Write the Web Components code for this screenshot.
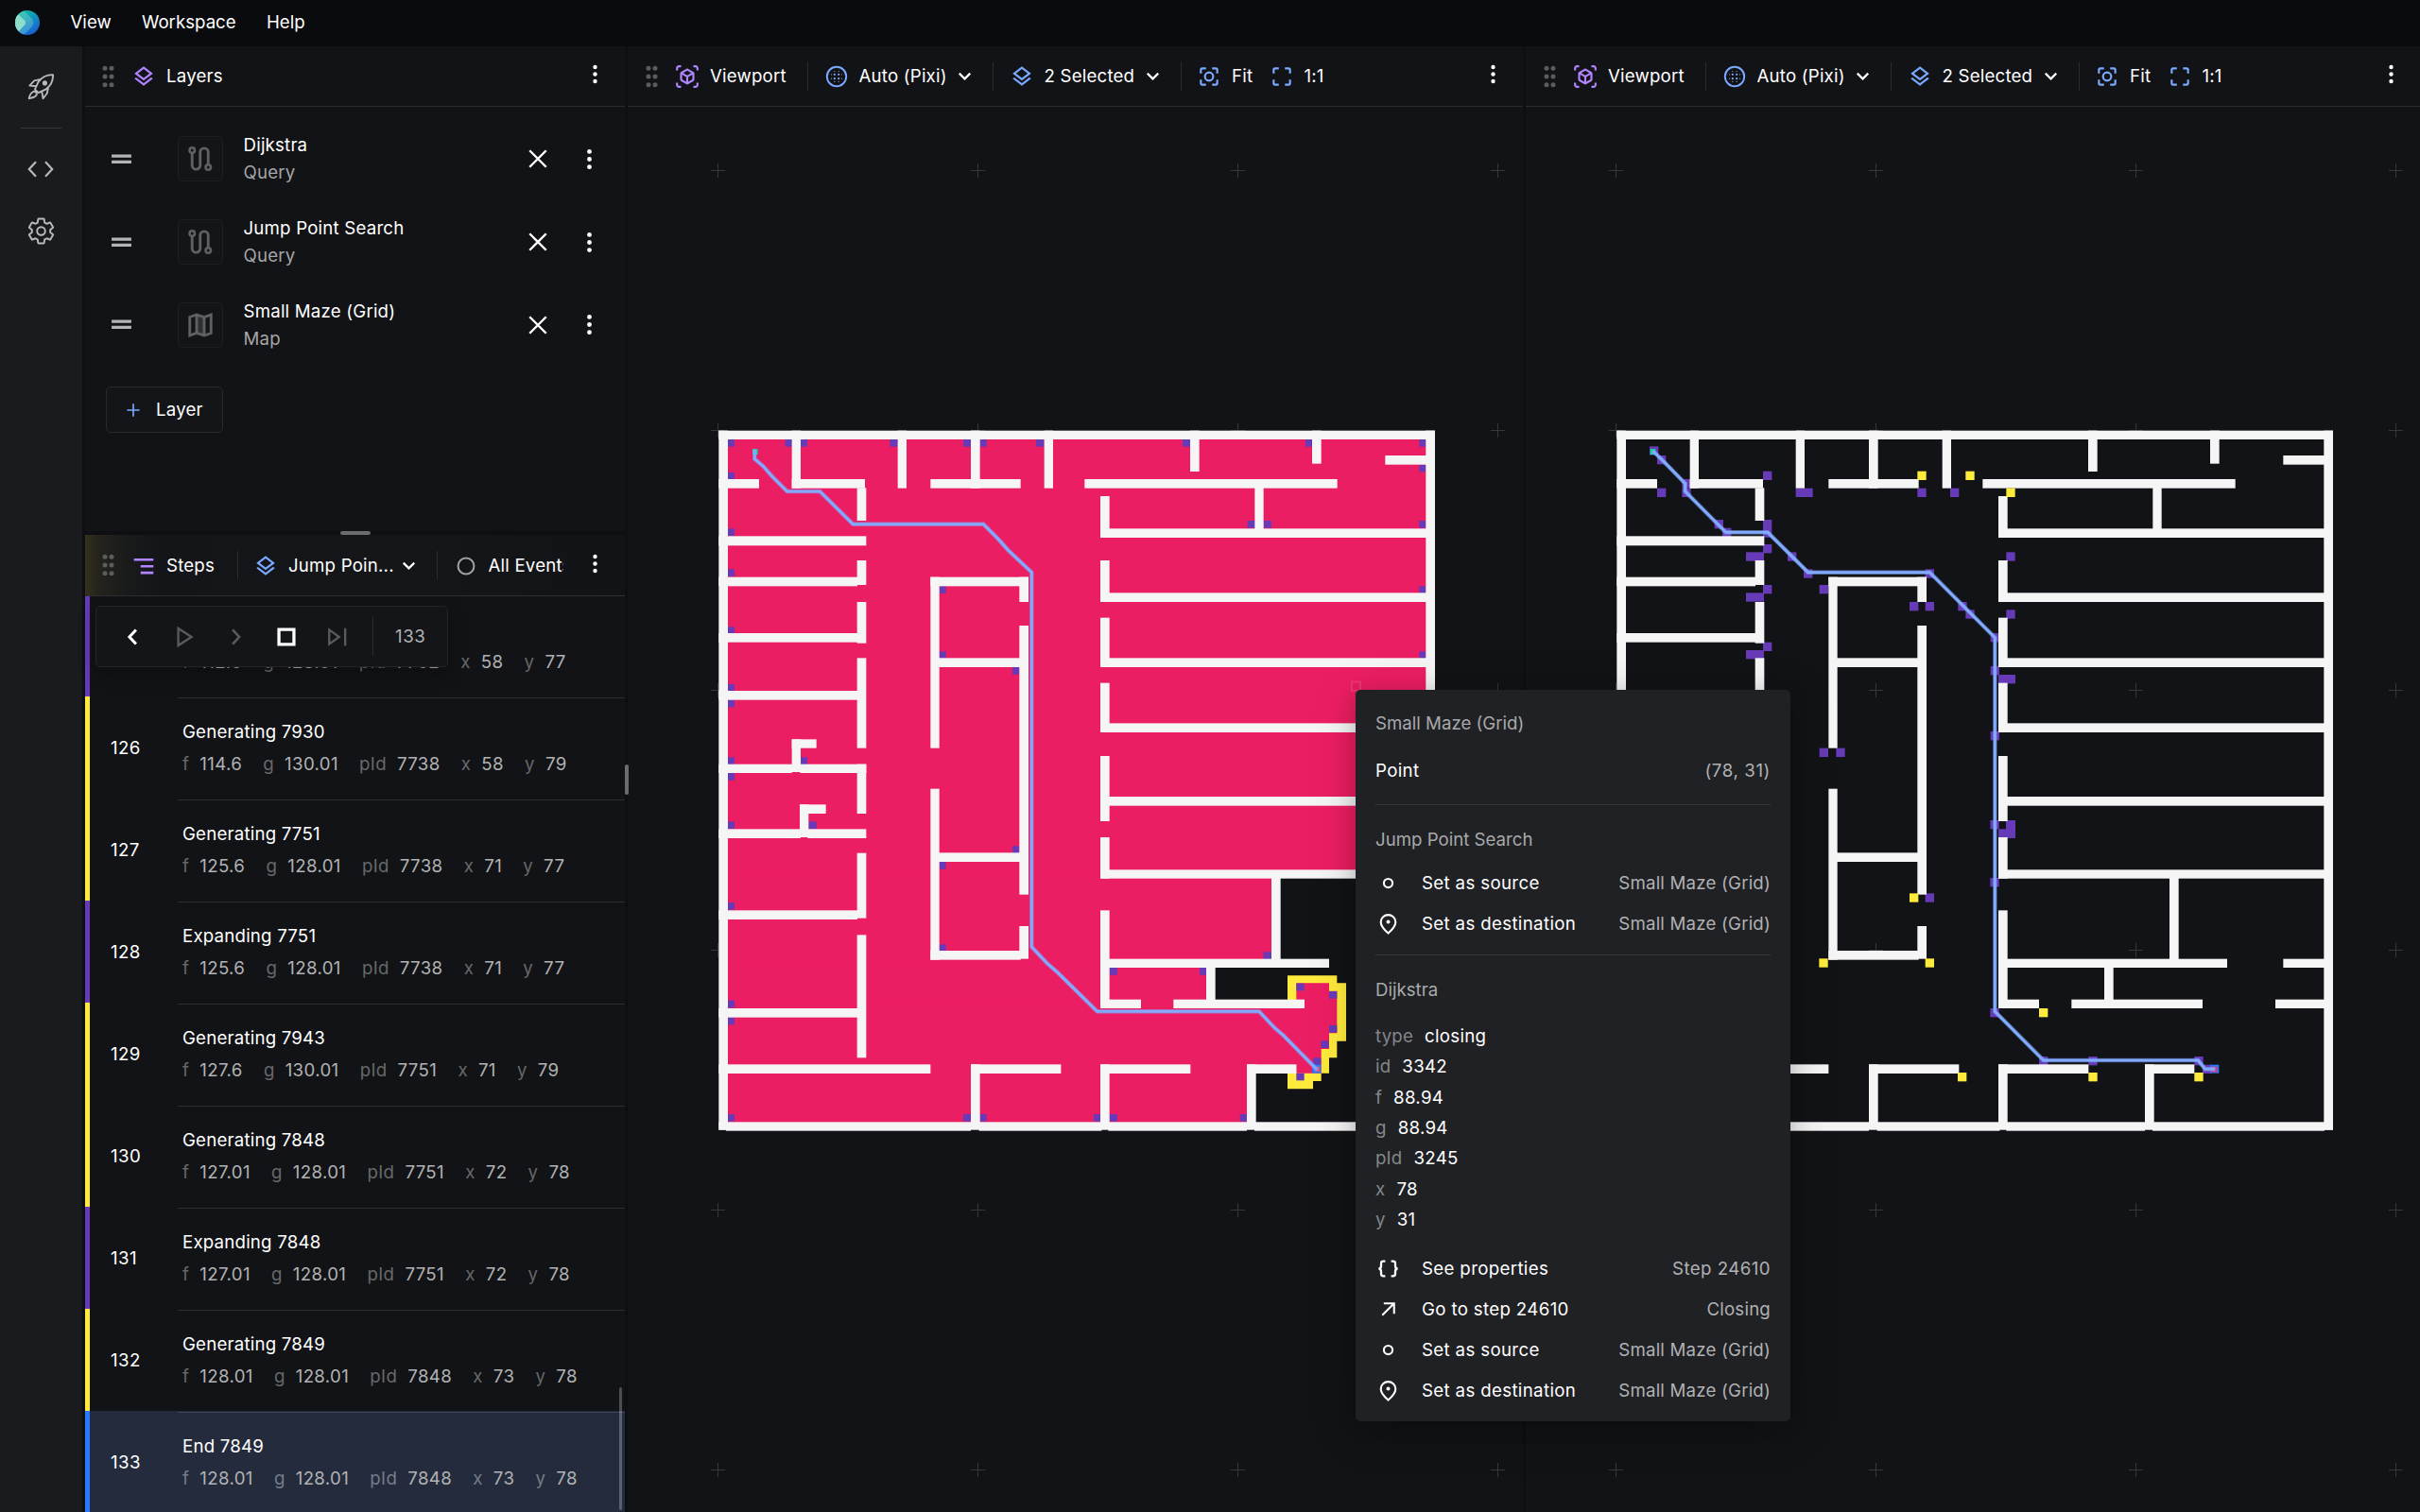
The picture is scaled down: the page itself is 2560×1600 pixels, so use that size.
<!DOCTYPE html>
<html lang="en">
<head>
<meta charset="utf-8">
<title>Workspace</title>
<style>
  html, body { margin: 0; height: 100%; background: #0f1013; overflow: hidden; }
  body { font-family: Inter, "Liberation Sans", sans-serif; font-size: 18.670px; color: #fff; letter-spacing: 0.2px; }
</style>
</head>
<body>
<search-workspace></search-workspace>
<script>
const define = (name, html, setup) => {
  const tpl = document.createElement('template');
  tpl.innerHTML = html;
  customElements.define(name, class extends HTMLElement {
    connectedCallback() {
      if (this.shadowRoot) return;
      this.attachShadow({ mode: 'open' }).append(tpl.content.cloneNode(true));
      if (setup) setup(this.shadowRoot, this);
    }
  });
};

/* ---------- icons ---------- */
const dots = (pts, r) => pts.map(([x, y]) => `<circle cx="${x}" cy="${y}" r="${r}"/>`).join('');
const line = (d, w = 2, extra = '') => `<path d="${d}" fill="none" stroke="currentColor" stroke-width="${w}" ${extra}/>`;
const ICONS = {
  layers: '<path d="M11.99 18.54l-7.37-5.73L3 14.07l9 7 9-7-1.63-1.27zM12 16l7.36-5.73L21 9l-9-7-9 7 1.63 1.27L12 16zm0-11.47L17.74 9 12 13.47 6.26 9 12 4.53z"/>',
  cube: '<path d="M3 4c0-.55.45-1 1-1h2V1H4C2.34 1 1 2.34 1 4v2h2V4zm0 16v-2H1v2c0 1.66 1.34 3 3 3h2v-2H4c-.55 0-1-.45-1-1zM20 1h-2v2h2c.55 0 1 .45 1 1v2h2V4c0-1.66-1.34-3-3-3zm1 19c0 .55-.45 1-1 1h-2v2h2c1.66 0 3-1.34 3-3v-2h-2v2zm-2-5.13V9.13c0-.72-.38-1.38-1-1.73l-5-2.88c-.31-.18-.65-.27-1-.27s-.69.09-1 .27L6 7.39c-.62.36-1 1.02-1 1.74v5.74c0 .72.38 1.38 1 1.73l5 2.88c.31.18.65.27 1 .27s.69-.09 1-.27l5-2.88c.62-.35 1-1.01 1-1.73zm-8 2.3l-4-2.3v-4.63l4 2.33v4.6zm1-6.33L8.04 8.53 12 6.25l3.96 2.28L12 10.84zm5 4.03l-4 2.3v-4.6l4-2.33v4.63z"/>',
  blur: '<circle cx="12" cy="12" r="9.4" fill="none" stroke="currentColor" stroke-width="1.8"/>' +
    dots([[10,10],[14,10],[10,14],[14,14]], 1) +
    dots([[7,10],[7,14],[17,10],[17,14],[10,7],[14,7],[10,17],[14,17]], .55),
  focus: line('M4 9V5.500Q4 4 5.500 4H9M15 4h3.500Q20 4 20 5.500V9M20 15v3.500Q20 20 18.500 20H15M9 20H5.500Q4 20 4 18.500V15') + '<circle cx="12" cy="12" r="4" fill="none" stroke="currentColor" stroke-width="2"/>',
  frame: line('M4 9V5.500Q4 4 5.500 4H9M15 4h3.500Q20 4 20 5.500V9M20 15v3.500Q20 20 18.500 20H15M9 20H5.500Q4 20 4 18.500V15'),
  chevron: line('M6 9l6 6L18 9', 2.3),
  kebab: dots([[12,4.200],[12,12],[12,19.800]], 2.3),
  segment: '<path d="M2.500 4.500h19v2.400h-19zM9 11h12.500v2.400H9zM9 17.400h12.500v2.400H9z"/>',
  ring: '<circle cx="12" cy="12" r="7.8" fill="none" stroke="currentColor" stroke-width="1.9"/>',
  ringSmall: '<circle cx="12" cy="12" r="4.4" fill="none" stroke="currentColor" stroke-width="2"/>',
  pin: line('M12 3C8.200 3 4.500 5.800 4.500 10.200c0 3.300 2.400 6.800 7.500 11.400 5.100-4.600 7.500-8.100 7.500-11.400C19.500 5.800 15.800 3 12 3z', 2) + '<circle cx="12" cy="10" r="1.9"/>',
  braces: line('M9 4.500H7Q4.800 4.500 4.800 6.700v2.600Q4.800 12 2.300 12 4.800 12 4.800 14.700v2.600Q4.800 19.500 7 19.500h2M15 4.500h2q2.200 0 2.200 2.200v2.600Q19.200 12 21.700 12q-2.500 0-2.500 2.700v2.600q0 2.200-2.200 2.200h-2', 2.2),
  outward: line('M6 18L17 7M7.500 6H18v10.500', 2),
  plus: line('M12 4v16M4 12h16', 2),
  close: line('M4.500 4.500l15 15M19.500 4.500l-15 15', 2.1),
  handle: '<path d="M2 7.200h20v3H2zM2 13.200h20v3H2z"/>',
  route: line('M5 7.200V17.500a3.400 3.400 0 0 0 6.800 0V6.500a3.400 3.400 0 0 1 6.800 0V17', 2.3) + '<g fill="none" stroke="currentColor" stroke-width="2"><circle cx="5" cy="4.800" r="2.200"/><circle cx="18.600" cy="19.200" r="2.200"/></g>',
  map: '<path d="M8.800 3.200l6.400 2.100v15.500l-6.400-2.100z" opacity=".35"/>' + line('M3 5.200l5.800-2 6.400 2.100L21 3.200v15.600l-5.800 2-6.400-2.100L3 20.800zM8.800 3.200v15.500M15.200 5.300v15.500', 2.3),
  code: line('M8 5.800L2.200 12l5.800 6.200M16 5.800l5.800 6.200-5.800 6.200', 1.7),
  gear: line('M19.430 12.980c.04-.32.07-.64.07-.98 0-.34-.03-.66-.07-.98l2.110-1.650c.19-.15.24-.42.12-.64l-2-3.460c-.12-.22-.4-.3-.61-.22l-2.490 1c-.52-.4-1.080-.73-1.690-.98l-.38-2.650C14.460 2.180 14.250 2 14 2h-4c-.25 0-.46.18-.49.42l-.38 2.650c-.61.25-1.170.59-1.690.98l-2.490-1c-.22-.08-.49 0-.61.22l-2 3.460c-.13.22-.07.49.12.64l2.110 1.650c-.04.32-.07.65-.07.98 0 .33.03.66.07.98l-2.110 1.650c-.19.15-.24.42-.12.64l2 3.460c.12.22.39.3.61.22l2.490-1c.52.4 1.080.73 1.690.98l.38 2.650c.03.24.24.42.49.42h4c.25 0 .46-.18.49-.42l.38-2.650c.61-.25 1.170-.59 1.690-.98l2.490 1c.22.08.49 0 .61-.22l2-3.460c.12-.22.07-.49-.12-.64z', 1.5, 'stroke-linejoin="round"') + '<circle cx="12" cy="12" r="3.300" fill="none" stroke="currentColor" stroke-width="1.5"/>',
  rocket: line('M23.200 1C17.500.8 13 3.200 9.800 7.600L6.800 14.200 10 17.300l6.500-3C21 11 23.400 6.700 23.200 1zM12 5L6.200 6.300 2 10.800l6.400.6M13 15.800l1.200 6.700 3.600-4.700 1.200-6M5 16.500c1.800-1.200 4.200 1 3.100 3-1 1.900-3.800 2.300-6.600 3C1.900 20 2.600 17.800 5 16.500z', 1.6, 'stroke-linejoin="round"') + '<circle cx="15.800" cy="8.500" r="2.200"/>',
  prev: line('M14.500 5.500L8.500 12l6 6.500', 2.6),
  next: line('M9.500 5.500l6 6.500-6 6.500', 2.2),
  play: line('M6.500 4.200v15.600L18.500 12z', 2),
  stop: line('M5.200 5.200h13.600v13.600H5.200z', 2.8),
  skip: line('M4.500 5.500v13l9-6.500zM19 4v16', 2)
};

define('ui-icon', `<style>
  :host { display: inline-flex; flex: none; width: 26px; height: 26px; }
  svg { width: 100%; height: 100%; fill: currentColor; display: block; }
</style>`, (root, el) => {
  const size = el.getAttribute('size');
  if (size) el.style.width = el.style.height = size + 'px';
  const holder = document.createElement('template');
  holder.innerHTML = `<svg viewBox="0 0 24 24">${ICONS[el.getAttribute('name')]}</svg>`;
  root.append(holder.content);
});

/* ---------- menu bar and rail ---------- */
define('app-menubar', `<style>
  :host { display: flex; align-items: center; height: 49px; padding: 0 0 1px 16px; box-sizing: border-box; background: #0a0b0f; flex: none; letter-spacing: 0; }
  svg { width: 26px; height: 26px; margin-right: 32.500px; }
  span { margin-right: 32.300px; position: relative; top: -1px; }
</style>
<svg viewBox="0 0 26 26">
  <defs>
    <linearGradient id="a" x1="0" y1="0" x2=".6" y2="1"><stop offset="0" stop-color="#0fc0a0"/><stop offset=".4" stop-color="#0da3b4"/><stop offset="1" stop-color="#1d5fd6"/></linearGradient>
    <linearGradient id="b" x1="0" y1="0" x2=".4" y2="1"><stop offset="0" stop-color="#3dd3ae"/><stop offset="1" stop-color="#3f93d8"/></linearGradient>
    <clipPath id="c"><circle cx="13" cy="13" r="13"/></clipPath>
  </defs>
  <g clip-path="url(#c)">
    <rect width="26" height="26" fill="url(#a)"/>
    <path d="M0 0H9L18 9Q20.500 13 18 17L9 26H0z" fill="url(#b)"/>
    <path d="M0 3L4 5 10 10.500Q12 13 10 15.500L4 22 0 26z" fill="#8fdccb"/>
  </g>
</svg><span>View</span><span>Workspace</span><span>Help</span>`);

define('side-rail', `<style>
  :host { display: flex; flex-direction: column; align-items: center; width: 87px; box-sizing: border-box; padding: 29px 1px 0 0; background: #1a1b1f; color: #b9babb; flex: none; }
  hr { width: 43px; height: 1px; border: 0; margin: 29px 0 28px; background: #37383b; }
</style>
<ui-icon name="rocket" size="28"></ui-icon><hr>
<ui-icon name="code" size="30" style="margin-bottom:35px"></ui-icon>
<ui-icon name="gear" size="31"></ui-icon>`);

/* ---------- panel chrome ---------- */
define('panel-header', `<style>
  :host { display: flex; align-items: center; height: 64px; box-sizing: border-box; padding: 0 20.500px 0 var(--inset, 19px); border-bottom: 1px solid #2b2c2f; flex: none; }
  .grip { width: 13px; height: 24px; margin-right: 18px; fill: #5b5c5e; flex: none; }
  .content { display: flex; align-items: center; flex: 1; min-width: 0; height: 100%; }
  .kebab { margin-left: auto; position: relative; top: -2px; }
</style>
<svg class="grip" viewBox="0 0 13 24"><circle cx="3" cy="3.300" r="2.500"/><circle cx="10" cy="3.300" r="2.500"/><circle cx="3" cy="12" r="2.500"/><circle cx="10" cy="12" r="2.500"/><circle cx="3" cy="20.700" r="2.500"/><circle cx="10" cy="20.700" r="2.500"/></svg>
<div class="content"><slot></slot></div>
<ui-icon class="kebab" name="kebab" size="23"></ui-icon>`);

define('tool-label', `<style>
  :host { display: flex; align-items: center; flex: none; white-space: nowrap; }
  ui-icon { color: var(--tint, #7aa9ff); margin-right: 11px; }
  span { overflow: hidden; }
</style><ui-icon></ui-icon><span><slot></slot></span>`, (root, el) => {
  const icon = document.createElement('ui-icon');
  icon.setAttribute('name', el.getAttribute('icon'));
  root.querySelector('ui-icon').replaceWith(icon);
  root.querySelector('span').style.width = (+el.getAttribute('text-width') + .5) + 'px';
});

define('tool-rule', `<style>:host { display: block; width: 1px; height: 30px; background: #2b2c2f; margin-right: 16.500px; flex: none; }</style>`);

/* ---------- layers panel ---------- */
define('layer-item', `<style>
  :host { display: flex; align-items: center; height: 87.700px; padding: 0 25px 0 26px; }
  .box { width: 46px; height: 46px; border: 1px solid #1e1f23; border-radius: 4px; display: flex; align-items: center; justify-content: center; margin: 0 21.500px 0 47px; color: #5f6063; background: #141518; }
  .t { flex: 1; line-height: 29px; }
  small { display: block; font-size: inherit; color: #a5a6a7; }
</style>
<ui-icon name="handle" size="25" style="color:#b4b5b6"></ui-icon>
<div class="box"><ui-icon></ui-icon></div>
<div class="t"><slot></slot><small></small></div>
<ui-icon name="close" size="28" style="margin-right:28px"></ui-icon>
<ui-icon name="kebab" size="25"></ui-icon>`, (root, el) => {
  const icon = document.createElement('ui-icon');
  icon.setAttribute('name', el.getAttribute('icon'));
  icon.setAttribute('size', '30');
  root.querySelector('.box ui-icon').replaceWith(icon);
  root.querySelector('small').textContent = el.getAttribute('kind');
});

define('layers-panel', `<style>
  :host { display: flex; flex-direction: column; height: 513px; background: #121316; flex: none; --inset: 18px; }
  .list { padding-top: 11.500px; }
  button { font: inherit; letter-spacing: inherit; color: inherit; display: flex; align-items: center; width: 124px; height: 49px; margin: 21.500px 0 0 22px; padding: 0 0 0 18px; background: #141519; border: 1px solid #28292d; border-radius: 5px; }
</style>
<panel-header style="--tint:#b085ff"><tool-label icon="layers" text-width="80">Layers</tool-label></panel-header>
<div class="list">
  <layer-item icon="route" kind="Query">Dijkstra</layer-item>
  <layer-item icon="route" kind="Query">Jump Point Search</layer-item>
  <layer-item icon="map" kind="Map">Small Maze (Grid)</layer-item>
</div>
<button><ui-icon name="plus" size="20" style="color:#7aa9ff;margin-right:14px"></ui-icon>Layer</button>`);

/* ---------- steps panel ---------- */
define('step-row', `<style>
  :host { display: flex; height: 108px; box-sizing: border-box; border-left: 5px solid var(--stripe); flex: none; }
  .n { width: 93px; padding-left: 22px; box-sizing: border-box; line-height: 109px; flex: none; letter-spacing: .4px; }
  .b { flex: 1; border-top: 1px solid #2d2e31; margin-top: 1px; padding: 20px 0 0 5px; white-space: nowrap; }
  .t { height: 33px; line-height: 32px; }
  .p { display: flex; line-height: 34px; color: #b1b2b3; letter-spacing: .35px; }
  .p i { font-style: normal; color: #67686a; margin-right: 11px; }
  .p span { margin-right: 22.200px; }
  :host([selected]) { background: #232b3c; }
  :host([selected]) .b { border-color: #3c4453; }
  :host([selected]) .p i { color: #767c88; }
</style><div class="n"></div><div class="b"><div class="t"><slot></slot></div><div class="p"></div></div>`, (root, el) => {
  root.querySelector('.n').textContent = el.getAttribute('step') || '';
  const names = ['f', 'g', 'pId', 'x', 'y'];
  root.querySelector('.p').innerHTML = el.getAttribute('props').split(' ')
    .map((v, i) => `<span><i>${names[i]}</i>${v}</span>`).join('');
});

define('playback-bar', `<style>
  :host { display: flex; align-items: center; width: 373px; height: 65px; box-sizing: border-box; border: 1px solid #242529; border-radius: 5px; background: #141518; box-shadow: 0 6px 18px rgba(0,0,0,.28); padding-left: 25px; color: #5a5b5e; }
  ui-icon { margin-right: 26px; width: 28px; height: 28px; }
  .on { color: #fff; }
  b { width: 1px; height: 41px; background: #2b2c2f; margin: 0 23px 0 -3px; }
  span { color: #b1b2b3; letter-spacing: .6px; }
</style>
<ui-icon class="on" name="prev"></ui-icon><ui-icon name="play"></ui-icon><ui-icon name="next"></ui-icon><ui-icon class="on" name="stop"></ui-icon><ui-icon name="skip"></ui-icon><b></b><span>133</span>`);

define('steps-panel', `<style>
  :host { display: flex; flex-direction: column; flex: 1; min-height: 0; background: #121316; position: relative; --inset: 18px; }
  panel-header { height: 65px; background: linear-gradient(90deg, #35311d 0, #25231c 14px, #191a1b 45px, #141518 80px, #151619 60%, #121316 100%); border-color: #2f2f34; }
  tool-label { padding-top: 1px; }
  .rows { display: flex; flex-direction: column; flex: 1; min-height: 0; overflow: hidden; }
  .rows step-row:first-child { margin-top: -2px; }
  .gen { --stripe: #ffeb3b; } .exp { --stripe: #673ab7; } .end { --stripe: #2979ff; }
  playback-bar { position: absolute; left: 11px; top: 75px; }
  .thumb { position: absolute; right: 3px; top: 902px; width: 3px; height: 130px; border-radius: 2px; background: rgba(255,255,255,.25); }
</style>
<panel-header>
  <tool-label icon="segment" text-width="74" style="--tint:#b085ff">Steps</tool-label><tool-rule></tool-rule>
  <tool-label icon="layers" text-width="115.5">Jump Poin...</tool-label><ui-icon name="chevron" size="23" style="margin-right:18px"></ui-icon><tool-rule></tool-rule>
  <tool-label icon="ring" text-width="79" style="--tint:#a0a1a2">All Events</tool-label>
</panel-header>
<div class="rows">
  <step-row class="exp" props="112.6 128.01 7732 58 77"></step-row>
  <step-row class="gen" step="126" props="114.6 130.01 7738 58 79">Generating 7930</step-row>
  <step-row class="gen" step="127" props="125.6 128.01 7738 71 77">Generating 7751</step-row>
  <step-row class="exp" step="128" props="125.6 128.01 7738 71 77">Expanding 7751</step-row>
  <step-row class="gen" step="129" props="127.6 130.01 7751 71 79">Generating 7943</step-row>
  <step-row class="gen" step="130" props="127.01 128.01 7751 72 78">Generating 7848</step-row>
  <step-row class="exp" step="131" props="127.01 128.01 7751 72 78">Expanding 7848</step-row>
  <step-row class="gen" step="132" props="128.01 128.01 7848 73 78">Generating 7849</step-row>
  <step-row class="end" selected step="133" props="128.01 128.01 7848 73 78">End 7849</step-row>
</div>
<playback-bar></playback-bar><div class="thumb"></div>`);

/* ---------- maze viewports ---------- */
/* Maze geometry in thirds of a pixel: x1,y1,x2,y2 */
const WALLS = [
  [31,47,2304,75],[31,47,60,2267],[2275,47,2304,2267],[31,2242,2304,2267],
  [54,2264,831,2270],[857,2264,1246,2270],[1267,2264,1707,2270],[1731,2264,2277,2270],
  [263,47,291,230],[31,201,159,230],[263,201,495,230],[470,229,499,333],[599,47,627,230],
  [703,201,989,230],[831,47,860,230],[1064,47,1092,230],
  [31,382,499,412],[470,459,499,537],[31,512,471,541],[470,591,499,722],[31,690,471,719],
  [470,769,499,1055],[31,873,480,902],[263,1027,341,1055],[263,1027,291,1110],
  [31,1106,499,1131],[31,1128,263,1134],[289,1128,499,1134],[470,1106,499,1263],
  [288,1234,371,1263],[288,1234,316,1320],[31,1312,499,1338],[31,1335,291,1341],[313,1335,499,1341],
  [470,1388,499,1595],[31,1570,471,1599],[470,1648,499,2038],[31,1881,480,1910],
  [31,2059,703,2088],[831,2059,860,2250],[831,2059,1117,2088],
  [703,512,1014,541],[985,512,1014,591],[703,512,731,1055],[728,769,990,798],[985,666,1014,1520],
  [703,1184,731,1727],[728,1387,990,1416],[703,1698,989,1727],[985,1620,1014,1724],
  [1527,47,1556,177],[1914,47,1943,152],[2146,126,2280,155],[1192,201,1994,230],[1732,225,1760,360],
  [1242,255,1271,387],[1242,358,2280,387],[1242,459,1271,591],[1242,562,2280,591],
  [1242,641,1271,798],[1242,769,2280,798],[1242,848,1271,1005],[1242,976,2280,1005],
  [1242,1080,1271,1287],[1242,1209,2280,1238],[1242,1338,1271,1469],[1242,1441,2280,1469],
  [1242,1570,1271,1881],[1785,1465,1814,1730],[1242,1724,1968,1752],[1578,1750,1607,1856],
  [1242,1853,1371,1881],[1474,1853,1890,1881],[2146,1724,2280,1752],[2121,1853,2280,1881],
  [1242,2059,1271,2250],[1242,2059,1528,2088],[1707,2059,1736,2250],[1707,2059,1864,2088]
];
const box = ([a, b, c, d], fill) => `<rect x="${a}" y="${b}" width="${c - a}" height="${d - b}" fill="${fill}"/>`;
const cells = (list, w, h, fill) => list.map(([x, y, cw = w, ch = h]) => box([x, y, x + cw, y + ch], fill)).join('');
const trace = pts => `<polyline points="${pts}" fill="none" stroke="#7daaff" stroke-opacity=".45" stroke-width="14"/><polyline points="${pts}" fill="none" stroke="#82aaff" stroke-width="9"/>`;
const PINK = '#ec1e63', PURPLE = '#673ab7', YELLOW = '#ffeb3b', BLUE = '#2979ff';

const SCENES = {
  dijkstra: () => {
    const open = [[60,60,2290,1455],[60,1450,1800,1740],[60,1735,1600,1860],[60,1855,1864,2062],[60,2060,1725,2250]].map(r => box(r, PINK)).join('');
    const frontier = `<path fill="${YELLOW}" d="M1836 1777H1993V1801H2022V1985H1993V2038H1968V2087H1943V2112H1917V2137H1836V2080H1864V1860H1836z"/>` +
      `<path fill="${PINK}" d="M1864 1801H1968V1826H1993V1960H1968V2010H1943V2087H1864V2060H1850V1870H1864z"/>`;
    const marks = [[60,75],[242,75],[291,75],[574,75],[807,75],[860,75],[1038,75],[60,180],[60,358],[60,487],[60,670],[60,852],[60,902],[60,1084],[60,1134],[291,1084],
      [60,1288],[316,1288],[60,1545],[60,1856],[60,1910],[60,2217],[807,2217],[860,2217],[963,1366],[731,1416],[731,1678],[731,541],[731,748],[963,798],
      [1503,75],[1893,75],[2254,75],[2254,155],[1709,333],[1760,333],[2254,333],[2254,541],[2254,748],[1760,1702],[1271,1752],[1557,1752],
      [1864,1802],[1968,1827],[1968,1935],[1942,1984],[1917,2038],[1864,2087],[1221,2217],[1271,2217],[1685,2217]]
      .map(([x, y]) => [x, y, [60, 860, 731, 963, 291, 2254].includes(x) ? 21 : 25, 23]);
    return open + frontier + cells(marks, 24, 23, PURPLE) + WALLS.map(w => box(w, '#f5f5f5')).join('') +
      box([1914,2060,1942,2087], BLUE) + box([1923,2066,1938,2082], '#d85a8a') + box([138,105,155,123], '#17d39b') +
      trace('145,107 145,137 172,160 200,192 248,240 352,240 457,344 871,344 915,388 950,427 1024,497 1024,1686 1075,1740 1105,1766 1150,1810 1232,1891 1746,1891 1795,1943 1823,1967 1930,2076') +
      '<rect x="2039.500" y="844.500" width="28" height="28" fill="none" stroke="#fff" stroke-opacity=".12" stroke-width="5"/>';
  },
  jps: () => {
    const seen = [[135,97],[159,126],[238,201],[238,230],[159,230],[341,330],[366,356],[495,176],[599,230,54],[495,330,28,56],[495,408],[441,433,57],
      [495,537],[441,562,57],[495,719],[441,744,57],[573,433],[624,487],[1010,487],[674,537],[960,591],[1010,591],[1114,591],[1138,616],[1217,690],
      [1267,433],[1267,616],[1217,795],[1242,822,54],[1217,1002],[674,1055],[727,1055],[985,230],[1089,230],
      [1216,1284],[1266,1284,30,57],[1242,1312,30,29],[1216,1467],[1010,1516],[1216,1881],[1371,2034],[1528,2034],[1864,2034],[1890,2060]];
    const queued = [[985,176],[1138,176],[1267,230],[960,1516],[673,1723],[1010,1723],[1371,1881],[1113,2085],[1528,2085],[1864,2085]];
    return cells(seen, 28, 28, PURPLE) + WALLS.map(w => box(w, '#f5f5f5')).join('') + cells(queued, 28, 28, YELLOW) +
      box([1914,2060,1942,2087], BLUE) + box([1917,2066,1936,2084], '#e0336f') + box([137,105,154,123], '#17d39b') +
      trace('146,112 180,145 248,215 248,240 377,370 510,370 638,497 1024,497 1231,704 1231,1891 1385,2046 1876,2046 1898,2074 1930,2074');
  }
};

define('maze-viewport', `<style>
  :host { display: flex; flex-direction: column; background: #121316; min-width: 0; overflow: hidden; }
  .canvas { flex: 1; min-height: 0; display: block; width: 100%; }
</style>
<panel-header>
  <tool-label icon="cube" text-width="102.5" style="--tint:#b085ff">Viewport</tool-label><tool-rule></tool-rule>
  <tool-label icon="blur" text-width="100">Auto (Pixi)</tool-label><ui-icon name="chevron" size="23" style="margin-right:18px"></ui-icon><tool-rule></tool-rule>
  <tool-label icon="layers" text-width="103">2 Selected</tool-label><ui-icon name="chevron" size="23" style="margin-right:17.500px"></ui-icon><tool-rule></tool-rule>
  <tool-label icon="focus" text-width="39">Fit</tool-label>
  <tool-label icon="frame" text-width="40">1:1</tool-label>
</panel-header>`, (root, el) => {
  const holder = document.createElement('template');
  let marks = '';
  for (let x = 95; x < 960; x += 275) for (let y = 67; y < 1500; y += 275) marks += `M${x + .5} ${y - 7}v15M${x - 7} ${y + .5}h15`;
  holder.innerHTML = `<svg class="canvas" viewBox="0 0 947 1487" preserveAspectRatio="xMinYMin slice">
    <path d="${marks}" stroke="#36373a" stroke-width="1"/>
    <g transform="translate(86 327) scale(.333333)">${SCENES[el.getAttribute('scene')]()}</g></svg>`;
  root.append(holder.content);
});

/* ---------- context menu ---------- */
define('menu-item', `<style>
  :host { display: flex; align-items: center; height: 43px; letter-spacing: .35px; }
  .i { width: 48px; display: flex; padding-left: 1px; }
  .hint { margin-left: auto; color: #b0b1b3; letter-spacing: .2px; }
</style><span class="i"></span><slot></slot><span class="hint"></span>`, (root, el) => {
  root.querySelector('.i').innerHTML = `<ui-icon name="${el.getAttribute('icon')}" size="25"></ui-icon>`;
  const hint = root.querySelector('.hint');
  hint.textContent = el.getAttribute('hint');
  if (/\d/.test(hint.textContent)) hint.style.letterSpacing = '.45px';
});

define('point-menu', `<style>
  :host { display: block; width: 460px; height: 774px; box-sizing: border-box; padding: 8px 21px; background: #202125; border-radius: 5px; box-shadow: 0 10px 50px rgba(0,0,0,.2), 0 4px 20px rgba(0,0,0,.15); }
  h4 { margin: 0; font: inherit; color: #a8a9ab; line-height: 55px; height: 54px; letter-spacing: 0; }
  .pt { display: flex; justify-content: space-between; line-height: 47px; height: 46px; letter-spacing: .35px; }
  .pt span { color: #b0b1b3; letter-spacing: .6px; }
  hr { border: 0; height: 1px; background: #37383c; margin: 13px 0 9px; }
  .jps { margin-top: -2px; }
  dl { margin: 7px 0 14px; }
  dl div { display: flex; height: 32.350px; line-height: 32px; }
  dt { color: #85868a; margin-right: 12px; } dd { margin: 0; letter-spacing: .3px; }
</style>
<h4>Small Maze (Grid)</h4>
<div class="pt">Point<span>(78, 31)</span></div><hr>
<h4>Jump Point Search</h4>
<div class="jps">
  <menu-item icon="ringSmall" hint="Small Maze (Grid)">Set as source</menu-item>
  <menu-item icon="pin" hint="Small Maze (Grid)">Set as destination</menu-item>
</div><hr style="margin-top:11px">
<h4>Dijkstra</h4>
<dl><div><dt>type</dt><dd>closing</dd></div><div><dt>id</dt><dd>3342</dd></div><div><dt>f</dt><dd>88.94</dd></div><div><dt>g</dt><dd>88.94</dd></div><div><dt>pId</dt><dd>3245</dd></div><div><dt>x</dt><dd>78</dd></div><div><dt>y</dt><dd>31</dd></div></dl>
<menu-item icon="braces" hint="Step 24610">See properties</menu-item>
<menu-item icon="outward" hint="Closing">Go to step 24610</menu-item>
<menu-item icon="ringSmall" hint="Small Maze (Grid)">Set as source</menu-item>
<menu-item icon="pin" hint="Small Maze (Grid)">Set as destination</menu-item>`);

/* ---------- page ---------- */
define('search-workspace', `<style>
  :host { display: flex; flex-direction: column; width: 2560px; height: 1600px; overflow: hidden; position: relative; background: #0e0f12; }
  main { display: flex; flex: 1; min-height: 0; }
  .left { display: flex; flex-direction: column; width: 571px; margin: 0 3px; gap: 4px; position: relative; flex: none; }
  .h { position: absolute; background: #6b6c6f; border-radius: 2px; }
  maze-viewport { width: 947px; flex: none; }
  maze-viewport.a { margin-right: 3px; }
  point-menu { position: absolute; left: 1434px; top: 730px; }
</style>
<app-menubar></app-menubar>
<main>
  <side-rail></side-rail>
  <div class="left">
    <layers-panel></layers-panel><steps-panel></steps-panel>
    <div class="h" style="left:270px;top:513px;width:32px;height:4px"></div>
    <div class="h" style="left:571px;top:760px;width:4px;height:32px"></div>
  </div>
  <maze-viewport class="a" scene="dijkstra"></maze-viewport>
  <maze-viewport class="b" scene="jps"></maze-viewport>
</main>
<point-menu></point-menu>`);
</script>
</body>
</html>
